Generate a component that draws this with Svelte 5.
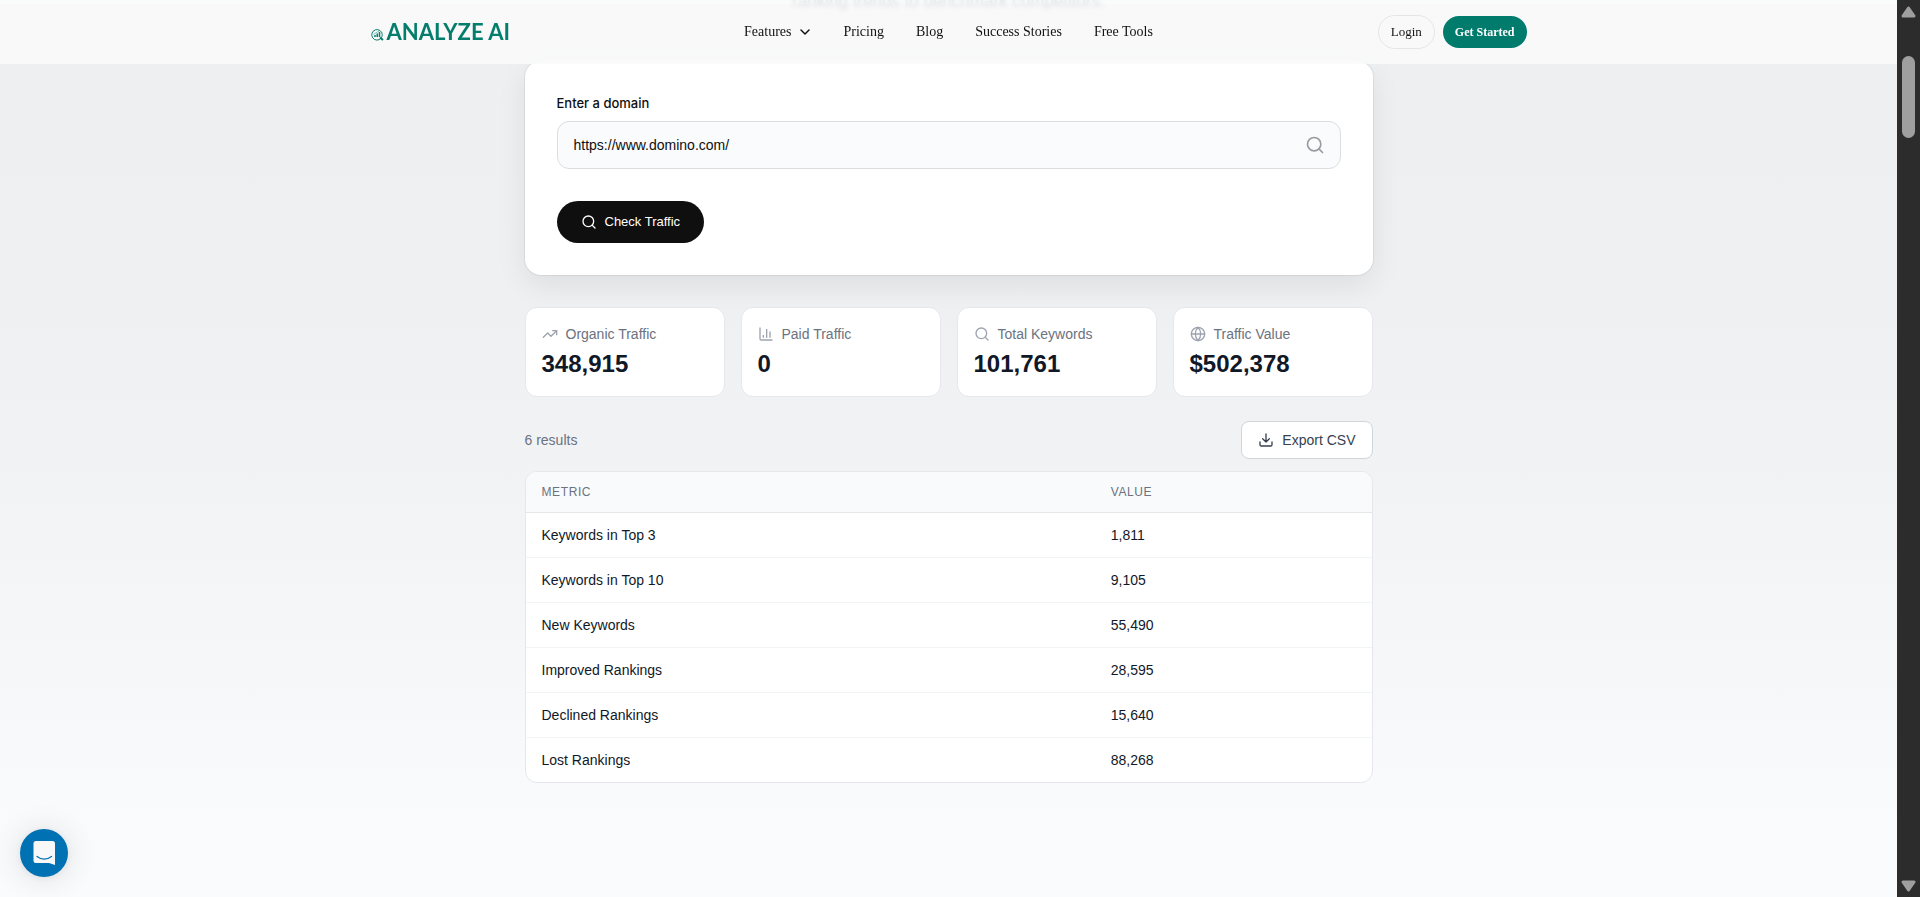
<script lang="ts">
    let domain = $state("https://www.domino.com/");

    const links = ["Pricing", "Blog", "Success Stories", "Free Tools"];

    const stats = [
        { icon: "trend", label: "Organic Traffic", value: "348,915" },
        { icon: "chart", label: "Paid Traffic", value: "0" },
        { icon: "search", label: "Total Keywords", value: "101,761" },
        { icon: "globe", label: "Traffic Value", value: "$502,378" }
    ];

    const rows = [
        { metric: "Keywords in Top 3", value: "1,811" },
        { metric: "Keywords in Top 10", value: "9,105" },
        { metric: "New Keywords", value: "55,490" },
        { metric: "Improved Rankings", value: "28,595" },
        { metric: "Declined Rankings", value: "15,640" },
        { metric: "Lost Rankings", value: "88,268" }
    ];

    function exportCsv(): void {
        const csv = ["Metric,Value", ...rows.map(r => `"${r.metric}","${r.value}"`)].join("\n");
        const link = document.createElement("a");
        link.href = URL.createObjectURL(new Blob([csv], { type: "text/csv" }));
        link.download = "traffic.csv";
        link.click();
    }
</script>

{#snippet icon(name: string)}
    <svg class="icon" viewBox="0 0 24 24" aria-hidden="true">
        {#if name === "trend"}
            <path d="M22 7 13.500 15.500 8.500 10.500 2 17" />
            <path d="M16 7h6v6" />
        {:else if name === "chart"}
            <path d="M3 3v16a2 2 0 0 0 2 2h16" />
            <path d="M18 17V9M13 17V5M8 17v-3" />
        {:else if name === "search"}
            <circle cx="11" cy="11" r="8" />
            <path d="m21 21-4.300-4.300" />
        {:else if name === "globe"}
            <circle cx="12" cy="12" r="10" />
            <path d="M12 2a14.500 14.500 0 0 0 0 20 14.500 14.500 0 0 0 0-20M2 12h20" />
        {:else if name === "download"}
            <path d="M21 15v4a2 2 0 0 1-2 2H5a2 2 0 0 1-2-2v-4" />
            <path d="m7 10 5 5 5-5M12 15V3" />
        {:else if name === "chevron"}
            <path d="m4 8 8 8 8-8" />
        {/if}
    </svg>
{/snippet}

<div class="window">
    <div class="page">
        <header>
            <div class="bar">
                <a class="logo" href="#home">
                    <svg viewBox="0 0 26 26" aria-hidden="true">
                        <path d="M20 20.500A10.500 10.500 0 1 1 22.500 13c0 3-1 5-2.500 7.500" />
                        <path d="m18 19 6 5" stroke-width="4" />
                        <path d="M8 18v-4M12.500 18v-7M17 18V8" stroke-width="3" />
                        <path d="m5 13 6-4 5-3" stroke-width="1" />
                    </svg>
                    <span>ANALYZE AI</span>
                </a>
                <nav>
                    <a class="features" href="#features">Features {@render icon("chevron")}</a>
                    {#each links as link}
                        <a href="#{link.toLowerCase().replace(' ', '-')}">{link}</a>
                    {/each}
                </nav>
                <div class="account">
                    <a class="login" href="#login">Login</a>
                    <a class="start" href="#start">Get Started</a>
                </div>
            </div>
        </header>

        <main>
            <p class="intro">ranking trends to benchmark competitors.</p>

            <form class="checker" onsubmit={(e) => e.preventDefault()}>
                <label for="domain">Enter a domain</label>
                <div class="field">
                    <input id="domain" type="text" bind:value={domain} />
                    {@render icon("search")}
                </div>
                <button type="submit">{@render icon("search")} Check Traffic</button>
            </form>

            <div class="stats">
                {#each stats as stat}
                    <div class="stat">
                        <div class="stat-label">{@render icon(stat.icon)} {stat.label}</div>
                        <div class="stat-value">{stat.value}</div>
                    </div>
                {/each}
            </div>

            <div class="toolbar">
                <span>{rows.length} results</span>
                <button onclick={exportCsv}>{@render icon("download")} Export CSV</button>
            </div>

            <div class="table-box">
                <table>
                    <thead>
                        <tr><th>Metric</th><th>Value</th></tr>
                    </thead>
                    <tbody>
                        {#each rows as row}
                            <tr><td>{row.metric}</td><td>{row.value}</td></tr>
                        {/each}
                    </tbody>
                </table>
            </div>
        </main>

        <button class="chat" aria-label="Open chat">
            <svg viewBox="0 0 24 24" aria-hidden="true">
                <path class="bubble" d="M4 0h16.500A2.500 2.500 0 0 1 23 2.500V24L17 22H4a2.500 2.500 0 0 1-2.500-2.500v-17A2.500 2.500 0 0 1 4 0z" />
                <path class="smile" d="M5 15.500c4.500 3.300 10 3.300 14.500 0" />
            </svg>
        </button>
    </div>

    <div class="scrollbar" aria-hidden="true">
        <svg viewBox="0 0 15 12"><path d="M7.500 2 13 10H2z" /></svg>
        <div class="thumb"></div>
        <svg class="down" viewBox="0 0 15 12"><path d="M7.500 10 13 2H2z" /></svg>
    </div>
</div>

<style>
:global(body) {
    margin: 0;
}

.window {
    display: flex;
    height: 100vh;
    overflow: hidden;
    font-family: "Liberation Sans", Arial, sans-serif;
    font-size: 14px;
    line-height: 20px;
}

.window *, .window {
    box-sizing: border-box;
}

a {
    color: inherit;
    text-decoration: none;
}

button {
    font: inherit;
    cursor: pointer;
}

.icon {
    width: 16px;
    height: 16px;
    flex: none;
    fill: none;
    stroke: currentColor;
    stroke-width: 2;
    stroke-linecap: round;
    stroke-linejoin: round;
}

.page {
    position: relative;
    flex: 1;
    overflow: hidden;
    background: linear-gradient(#eeeff1, #eff0f2 35%, #f2f3f5 55%, #f9fafc 88%, #fafbfd);
}

header {
    position: absolute;
    top: 0;
    left: 0;
    right: 0;
    z-index: 2;
    height: 64px;
    background: linear-gradient(rgba(251, 255, 253, 0.8) 4px, rgba(251, 251, 251, 0.8) 4px);
    backdrop-filter: blur(2px);
    font-family: "Liberation Serif", "Times New Roman", serif;
    color: #111;
}

.bar {
    display: grid;
    grid-template-columns: 1fr auto 1fr;
    align-items: center;
    max-width: 1156px;
    height: 100%;
    margin: 0 auto;
}

.logo {
    display: flex;
    align-items: center;
    gap: 3px;
    font-family: Lato, sans-serif;
    font-size: 22px;
    font-weight: 700;
    line-height: 28px;
    color: #047d6c;
}

.logo svg {
    width: 13px;
    height: 13px;
    margin-top: 4px;
    fill: none;
    stroke: currentColor;
    stroke-width: 2;
}

nav {
    display: flex;
    gap: 32px;
}

.features {
    display: flex;
    align-items: center;
    gap: 8px;
}

.features .icon {
    width: 12px;
    height: 12px;
    stroke-width: 3;
}

.account {
    display: flex;
    align-items: center;
    justify-content: flex-end;
    gap: 8px;
    font-size: 13px;
}

.login {
    padding: 6px 12px;
    border: 1px solid #e5e5e5;
    border-radius: 17px;
}

.start {
    padding: 6px 12px;
    border-radius: 16px;
    background: #017c6c;
    font-size: 12px;
    font-weight: 700;
    color: #fff;
}

main {
    max-width: 848px;
    margin: 0 auto;
}

.intro {
    margin: -12px 0 45px;
    font-size: 17px;
    line-height: 28px;
    text-align: center;
    color: #6b7280;
}

.checker {
    padding: 32px;
    border-radius: 16px;
    background: #fff;
    box-shadow: 0 0 0 1px rgba(0, 0, 0, 0.06), 0 10px 30px rgba(0, 0, 0, 0.08);
}

.checker label {
    display: block;
    margin-bottom: 8px;
    font-family: Inter, sans-serif;
    font-size: 13px;
    font-weight: 500;
    color: #0f0f0f;
}

.field {
    position: relative;
    margin-bottom: 32px;
}

.field input {
    display: block;
    width: 100%;
    height: 48px;
    padding: 0 48px 0 16px;
    border: 1px solid #dcdde0;
    border-radius: 12px;
    background: #fafbfd;
    font: inherit;
    color: #0f0f0f;
}

.field .icon {
    position: absolute;
    top: 14px;
    right: 16px;
    width: 20px;
    height: 20px;
    color: #9a9ca3;
}

.checker button {
    display: flex;
    align-items: center;
    gap: 8px;
    height: 42px;
    padding: 0 24px;
    border: 0;
    border-radius: 21px;
    background: #0f0f0f;
    font-size: 13px;
    font-weight: 500;
    color: #fff;
}

.stats {
    display: grid;
    grid-template-columns: repeat(4, 1fr);
    gap: 16px;
    margin: 32px 0 24px;
}

.stat {
    padding: 16px;
    border: 1px solid #e5e7eb;
    border-radius: 12px;
    background: #fff;
}

.stat-label {
    display: flex;
    align-items: center;
    gap: 8px;
    margin-bottom: 4px;
    color: #6b7280;
}

.stat-label .icon {
    color: #9ca3af;
}

.stat-value {
    font-size: 24px;
    font-weight: 700;
    line-height: 32px;
    color: #111827;
}

.toolbar {
    display: flex;
    align-items: center;
    justify-content: space-between;
    margin-bottom: 12px;
    color: #6b7280;
}

.toolbar button {
    display: flex;
    align-items: center;
    gap: 8px;
    padding: 8px 16px;
    border: 1px solid #d1d5db;
    border-radius: 8px;
    background: #fff;
    color: #374151;
}

.table-box {
    overflow: hidden;
    border: 1px solid #e5e7eb;
    border-radius: 12px;
    background: #fff;
}

table {
    width: 100%;
    border-spacing: 0;
    color: #111827;
}

th, td {
    padding: 12px 16px;
    text-align: left;
}

th {
    border-bottom: 1px solid #e5e7eb;
    background: #f9fafb;
    font-size: 12px;
    font-weight: 500;
    line-height: 16px;
    letter-spacing: 0.05em;
    text-transform: uppercase;
    color: #6b7280;
}

td {
    border-bottom: 1px solid #f3f4f6;
}

tr:last-child td {
    border-bottom: 0;
}

.chat {
    position: absolute;
    left: 20px;
    bottom: 20px;
    display: flex;
    align-items: center;
    justify-content: center;
    width: 48px;
    height: 48px;
    padding: 0;
    border: 0;
    border-radius: 50%;
    background: #0071b2;
    box-shadow: 0 1px 6px rgba(0, 0, 0, 0.06), 0 2px 32px rgba(0, 0, 0, 0.12);
}

.chat svg {
    width: 24px;
    height: 24px;
}

.bubble {
    fill: #f8f8f8;
}

.smile {
    fill: none;
    stroke: #0071b2;
    stroke-width: 1.3;
    stroke-linecap: round;
}

.scrollbar {
    display: flex;
    flex-direction: column;
    align-items: center;
    width: 23px;
    padding: 6px 0 5px;
    background: #2c2c2c;
}

.scrollbar svg {
    width: 15px;
    height: 12px;
    fill: #9f9f9f;
    stroke: #9f9f9f;
    stroke-width: 3;
    stroke-linejoin: round;
}

.thumb {
    width: 13px;
    height: 82px;
    margin-top: 38px;
    border-radius: 7px;
    background: #9f9f9f;
}

.scrollbar .down {
    margin-top: auto;
}
</style>
